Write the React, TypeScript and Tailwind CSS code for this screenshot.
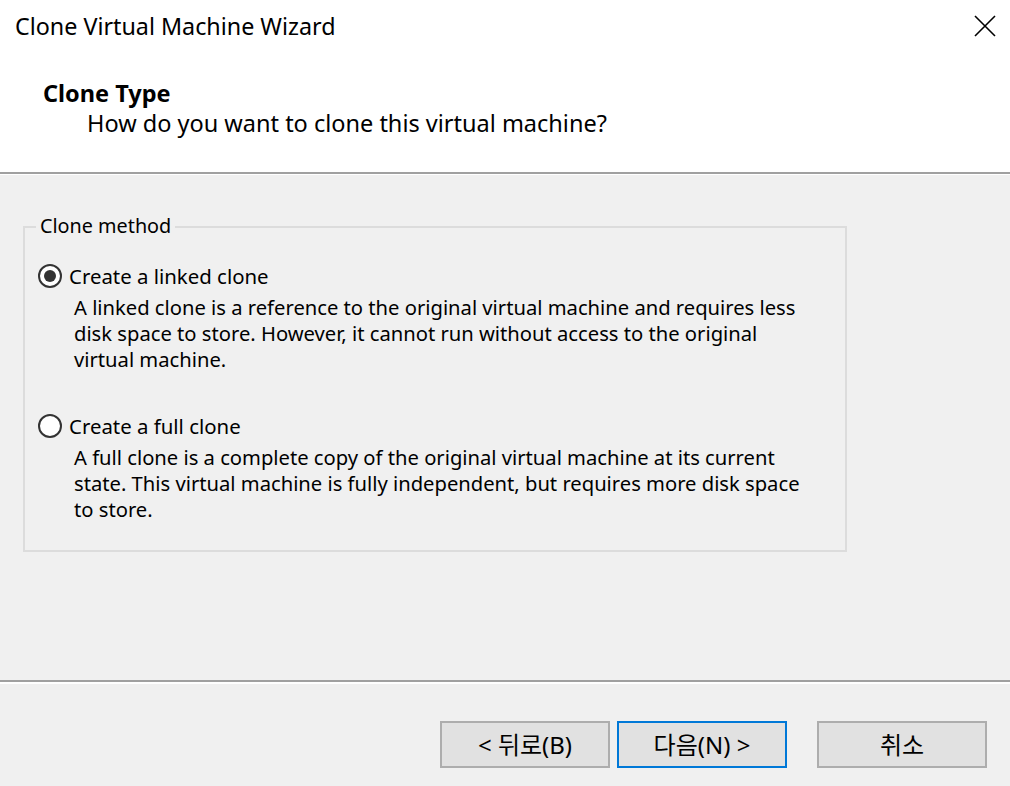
import React from "react";

const font = { fontFamily: '"Noto Sans", "Noto Sans CJK KR", sans-serif' };

function Radio({ checked }: { checked: boolean }) {
  return (
    <div className="w-[24px] h-[24px] rounded-full border-2 border-[#333333] bg-white flex items-center justify-center shrink-0">
      {checked && <div className="w-[12px] h-[12px] rounded-full bg-[#333333]" />}
    </div>
  );
}

function Option({ checked, label, lines }: { checked: boolean; label: string; lines: string[] }) {
  return (
    <div className="flex flex-col">
      <div className="flex items-center h-[26px] gap-[7px]">
        <Radio checked={checked} />
        <span className="leading-[26px] text-[20.4px]">{label}</span>
      </div>
      <div className="ml-[36px] mt-[5px] flex flex-col">
        {lines.map((l) => (
          <div key={l} className="leading-[26px] whitespace-nowrap">{l}</div>
        ))}
      </div>
    </div>
  );
}

export default function App() {
  return (
    <div className="w-[1010px] h-[786px] bg-[#f0f0f0] text-black text-[20.2px] flex flex-col overflow-hidden" style={font}>
      <div className="bg-white h-[172px] flex flex-col shrink-0">
        <div className="h-[52px] flex items-center justify-between pl-[15px] pr-[15px]">
          <span className="leading-[26px] text-[23.3px]">Clone Virtual Machine Wizard</span>
          <svg width="22" height="22" viewBox="0 0 22 22" className="mr-[-1px]">
            <path d="M1 1 L21 21 M21 1 L1 21" stroke="#000" strokeWidth="1.6" />
          </svg>
        </div>
        <div className="mt-[28px] pl-[43px] font-bold leading-[26px] text-[23.5px]">Clone Type</div>
        <div className="mt-[4px] pl-[87px] leading-[26px] text-[23.5px]">How do you want to clone this virtual machine?</div>
      </div>
      <div className="h-[2px] bg-[#a0a0a0] shrink-0" />
      <div className="h-[1px] bg-white shrink-0" />
      <div className="h-[505px] shrink-0 flex flex-col">
        <div className="relative mt-[51px] ml-[23px] w-[824px] h-[326px] border-2 border-[#dcdcdc] pt-[35px] pl-[13px]">
          <span className="absolute left-[11px] top-[-15px] px-[4px] bg-[#f0f0f0] leading-[26px] text-[19.8px]">Clone method</span>
          <Option
            checked
            label="Create a linked clone"
            lines={[
              "A linked clone is a reference to the original virtual machine and requires less",
              "disk space to store. However, it cannot run without access to the original",
              "virtual machine.",
            ]}
          />
          <div className="h-[41px]" />
          <Option
            checked={false}
            label="Create a full clone"
            lines={[
              "A full clone is a complete copy of the original virtual machine at its current",
              "state. This virtual machine is fully independent, but requires more disk space",
              "to store.",
            ]}
          />
        </div>
      </div>
      <div className="h-[2px] bg-[#a0a0a0] shrink-0" />
      <div className="h-[2px] bg-white shrink-0" />
      <div className="flex justify-end pr-[23px] pt-[37px] text-[24px]">
        <button className="w-[170px] h-[47px] bg-[#e1e1e1] border-2 border-[#adadad] flex items-center justify-center">
          &lt; 뒤로(B)
        </button>
        <button className="ml-[7px] w-[170px] h-[47px] bg-[#e1e1e1] border-2 border-[#0078d7] flex items-center justify-center">
          다음(N) &gt;
        </button>
        <button className="ml-[30px] w-[170px] h-[47px] bg-[#e1e1e1] border-2 border-[#adadad] flex items-center justify-center">
          취소
        </button>
      </div>
    </div>
  );
}
